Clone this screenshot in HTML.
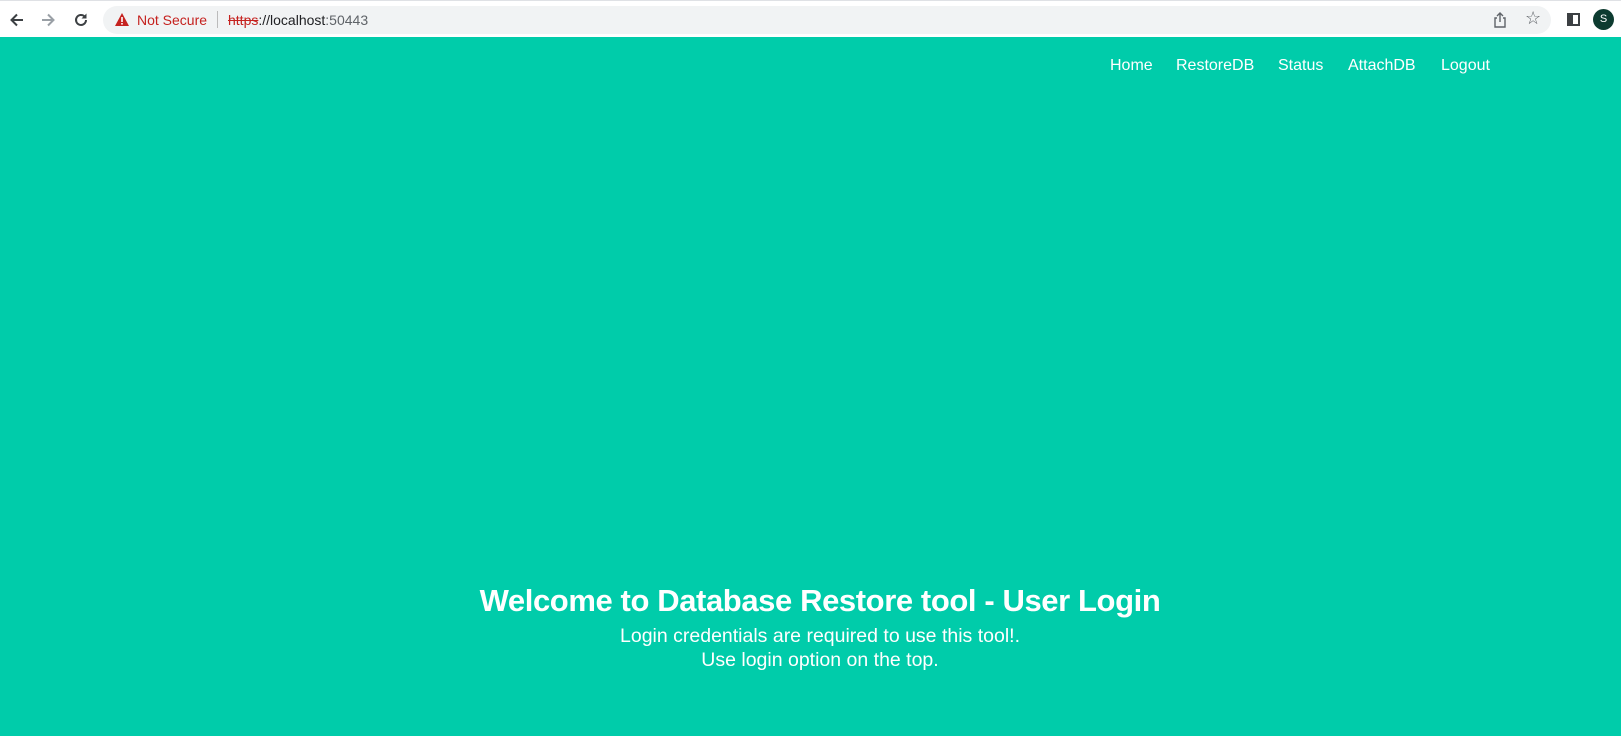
<!DOCTYPE html>
<html><head><meta charset="utf-8"><style>
*{margin:0;padding:0;box-sizing:border-box}
body{width:1621px;height:736px;overflow:hidden;font-family:"Liberation Sans",Arial,sans-serif;background:#00ccaa;position:relative}
.chrome{position:absolute;left:0;top:0;width:1621px;height:37px;background:#fff;border-top:1px solid #dfe1e5}
.omni{position:absolute;left:103px;top:5px;width:1448px;height:28px;border-radius:14px;background:#f1f3f4}
.ns{position:absolute;left:137px;top:11px;font-size:14px;color:#c5221f}
.sep{position:absolute;left:217px;top:10px;width:1px;height:17px;background:#bbb}
.url{position:absolute;left:228px;top:11px;font-size:14px;color:#202124}
.url s{color:#c5221f}
.url .g{color:#5f6368}
.nav{position:absolute;top:57px;font-size:16px;color:#fff}
.center{position:absolute;left:0;width:1621px;text-align:center;color:#fff}
</style></head><body>
<div class="chrome">
<svg style="position:absolute;left:8px;top:10px" width="18" height="18" viewBox="0 0 18 18"><path d="M15 9H4M9 3.5L3.5 9 9 14.5" stroke="#3c4043" stroke-width="2" fill="none"/></svg>
<svg style="position:absolute;left:39px;top:10px" width="18" height="18" viewBox="0 0 18 18"><path d="M3 9h11M9 3.5L14.5 9 9 14.5" stroke="#9aa0a6" stroke-width="2" fill="none"/></svg>
<svg style="position:absolute;left:72px;top:10px" width="18" height="18" viewBox="0 0 18 18"><path d="M14 9a5 5 0 1 1-1.5-3.6" stroke="#3c4043" stroke-width="2" fill="none"/><path d="M14.5 2.5v5h-5z" fill="#3c4043"/></svg>
<div class="omni"></div>
<svg style="position:absolute;left:114px;top:11px" width="16" height="15" viewBox="0 0 16 15"><path d="M8 1L15 14H1z" fill="#c5221f"/><rect x="7.2" y="5" width="1.6" height="5" fill="#fff"/><rect x="7.2" y="11" width="1.6" height="1.6" fill="#fff"/></svg>
<div class="ns">Not Secure</div><div class="sep"></div>
<div class="url"><s>https</s>://localhost<span class="g">:50443</span></div>
<svg style="position:absolute;left:1493px;top:11px" width="14" height="16" viewBox="0 0 14 16"><path d="M4 6H2v9h10V6h-2M7 10V1M4 4l3-3 3 3" stroke="#5f6368" stroke-width="1.4" fill="none"/></svg>
<div style="position:absolute;left:1525px;top:7px;font-size:18px;color:#5f6368">☆</div>
<div style="position:absolute;left:1567px;top:12px;width:13px;height:13px;border:2px solid #3c4043;border-left-width:6px"></div>
<div style="position:absolute;left:1593px;top:8px;width:21px;height:21px;border-radius:50%;background:#0d3b30;color:#fff;font-size:11px;text-align:center;line-height:21px">S</div>
</div>
<div class="nav" style="left:1110px">Home</div>
<div class="nav" style="left:1176px">RestoreDB</div>
<div class="nav" style="left:1278px">Status</div>
<div class="nav" style="left:1348px">AttachDB</div>
<div class="nav" style="left:1441px">Logout</div>
<div class="center" style="top:583px;font-size:31px;font-weight:bold;padding-left:19px;letter-spacing:-0.4px">Welcome to Database Restore tool - User Login</div>
<div class="center" style="top:624px;font-size:19.5px;line-height:24px;padding-left:19px">Login credentials are required to use this tool!.<br>Use login option on the top.</div>
</body></html>
